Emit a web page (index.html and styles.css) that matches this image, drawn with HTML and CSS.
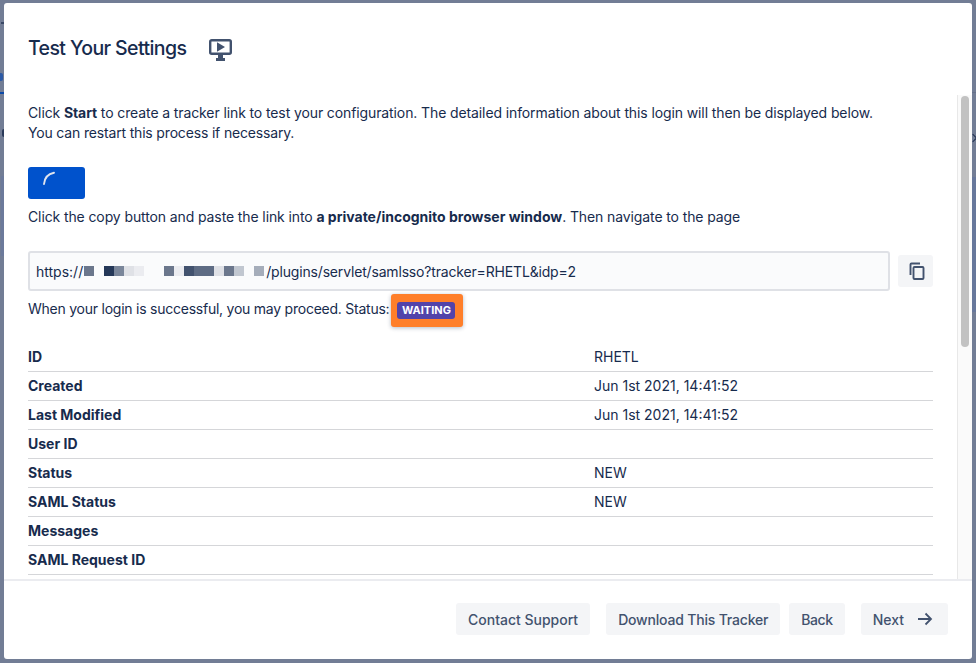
FILE: index.html
```html
<!DOCTYPE html>
<html lang="en">
<head>
    <meta charset="UTF-8">
    <meta name="viewport" content="width=device-width, initial-scale=1.0">
    <title>Test Your Settings</title>
    <link rel="stylesheet" href="styles.css">
</head>
<body>
    <!-- page behind the dialog, only its edges show -->
    <div class="backdrop">
        <span class="bg-tick"></span>
        <span class="bg-link"></span>
        <span class="bg-line"></span>
        <span class="bg-head"></span>
        <span class="bg-left"></span>
        <span class="bg-right"></span>
        <span class="bg-rule"></span>
        <span class="bg-arrow"></span>
    </div>
    <div class="modal">
        <div class="modal-header">
            <h1>Test Your Settings</h1>
            <svg class="title-icon" width="25" height="25" viewBox="0 0 25 25">
                <rect x="2.200" y="3.200" width="20.600" height="13.600" rx="1.500" fill="none" stroke="#42526e" stroke-width="2.400"/>
                <path fill="#42526e" d="M9 5.300 17 10l-8 4.700zM10 18h5v3h2v3H8v-3h2z"/>
            </svg>
        </div>
        <div class="modal-body">
            <div class="content">
                <p class="intro"><span class="tight-1">Click <b>Start</b> to create a tracker link to test your configuration. The detailed information about this login will then be displayed below.</span><br><span class="tight-2">You can restart this process if necessary.</span></p>
                <button class="start-btn">
                    <svg width="20" height="20" viewBox="0 0 20 20"><path d="M3 14C3.500 8.500 7 4 13 2.800" fill="none" stroke="#dfe4ee" stroke-width="1.900" stroke-linecap="round"/></svg>
                </button>
                <p class="copy-hint"><span class="tight-1">Click the copy button and paste the link into </span><b>a private/incognito browser window</b><span class="tight-1">. Then navigate to the page</span></p>
                <div class="link-row">
                    <div class="link-box">
                        <span>https://</span>
                        <span class="blur">
                            <i class="b1"></i><i class="gap"></i><i class="b2"></i><i class="b3"></i><i class="b4"></i><i class="b5"></i><i class="gap"></i><i class="gap"></i>
                            <i class="b1"></i><i class="b5"></i><i class="b6"></i><i class="b7"></i><i class="b7"></i><i class="b4"></i><i class="b1"></i><i class="b8"></i><i class="gap"></i><i class="b9"></i>
                        </span>
                        <span class="tight-2">/plugins/servlet/samlsso?tracker=RHETL&amp;idp=2</span>
                    </div>
                    <button class="copy-btn">
                        <svg width="20" height="20" viewBox="0 0 20 20" fill="none" stroke="#42526e" stroke-width="1.900">
                            <rect x="7.500" y="6" width="10" height="12" rx="1"/>
                            <path d="M4.500 14V3.500a1 1 0 0 1 1-1H14"/>
                        </svg>
                    </button>
                </div>
                <p class="status-line"><span class="tight-3">When your login is successful, you may proceed. Status:</span><span class="status-ring"><span class="lozenge">WAITING</span></span></p>
                <table class="info-table">
                    <tr><th>ID</th><td>RHETL</td></tr>
                    <tr><th>Created</th><td>Jun 1st 2021, 14:41:52</td></tr>
                    <tr><th>Last Modified</th><td>Jun 1st 2021, 14:41:52</td></tr>
                    <tr><th>User ID</th><td></td></tr>
                    <tr><th>Status</th><td>NEW</td></tr>
                    <tr><th>SAML Status</th><td>NEW</td></tr>
                    <tr><th>Messages</th><td></td></tr>
                    <tr><th>SAML Request ID</th><td></td></tr>
                </table>
            </div>
            <div class="scrollbar"><div class="thumb"></div></div>
        </div>
        <div class="modal-footer">
            <button class="btn btn-contact">Contact Support</button>
            <button class="btn btn-download">Download This Tracker</button>
            <button class="btn btn-back">Back</button>
            <button class="btn btn-next">Next
                <svg width="16" height="14" viewBox="0 0 16 14" fill="none" stroke="#42526e" stroke-width="1.800"><path d="M1 7h13M8.500 1.500 14 7l-5.500 5.500"/></svg>
            </button>
        </div>
    </div>
</body>
</html>
```
FILE: styles.css
```css
html, body {
    height: 100%;
}
body {
    margin: 0;
    background-color: #727d95;
    font-family: Inter, "Liberation Sans", sans-serif;
    font-size: 14px;
    color: #172b4d;
    overflow: hidden;
    padding: 3px 4px 4px;
    box-sizing: border-box;
}
.backdrop span {
    position: absolute;
    display: block;
}
.bg-tick {
    left: 1px;
    top: 22px;
    width: 3px;
    height: 2px;
    background-color: #3a4866;
}
.bg-link {
    left: 0;
    top: 73px;
    width: 3px;
    height: 8px;
    border-radius: 0 2px 2px 0;
    background-color: #2c5aa6;
}
.bg-line {
    left: 0;
    top: 92px;
    width: 4px;
    height: 2px;
    background-color: #0c4aa8;
}
.bg-head {
    left: 2px;
    top: 129px;
    width: 2px;
    height: 8px;
    border-radius: 2px 0 0 2px;
    background-color: #2a3a5a;
}
.bg-left {
    left: 1px;
    top: 176px;
    width: 3px;
    height: 80px;
    background-color: #6c7a9b;
}
.bg-right {
    left: 972px;
    top: 177px;
    width: 4px;
    height: 135px;
    background-color: #67779b;
}
.bg-rule {
    left: 972px;
    top: 92px;
    width: 4px;
    height: 1px;
    background-color: #66718a;
}
.bg-arrow {
    left: 970px;
    top: 135px;
    width: 5px;
    height: 5px;
    border-top: 1.500px solid #1f2f50;
    border-right: 1.500px solid #1f2f50;
    transform: rotate(45deg);
}
.modal {
    position: relative;
    height: 656px;
    background-color: #fff;
    border-radius: 3px;
    display: flex;
    flex-direction: column;
}
.modal-header {
    height: 92px;
    flex: none;
    display: flex;
    align-items: flex-start;
    padding: 33px 0 0 24px;
    box-sizing: border-box;
}
.modal-header h1 {
    margin: 0;
    font-size: 19.5px;
    line-height: 24px;
    font-weight: 500;
    letter-spacing: -0.6px;
}
.title-icon {
    margin-left: 22px;
    margin-top: 1px;
}
.modal-body {
    height: 484px;
    flex: none;
    display: flex;
    justify-content: space-between;
    overflow: hidden;
}
.content {
    width: 905px;
    margin-left: 24px;
    flex: none;
}
.tight-1 {
    letter-spacing: -0.11px;
}
.tight-2 {
    letter-spacing: -0.17px;
}
.tight-3 {
    letter-spacing: -0.24px;
}
.intro {
    margin: 8px 0 0;
    line-height: 20px;
}
.start-btn {
    display: flex;
    align-items: flex-start;
    width: 57px;
    height: 32px;
    margin-top: 24px;
    padding: 3px 0 0 13px;
    border: none;
    border-radius: 3px;
    background-color: #0052cc;
    box-sizing: border-box;
}
.copy-hint {
    margin: 8px 0 0;
    line-height: 20px;
}
.link-row {
    display: flex;
    justify-content: space-between;
    margin-top: 24px;
}
.link-box {
    width: 862px;
    height: 40px;
    box-sizing: border-box;
    display: flex;
    align-items: center;
    padding-left: 6px;
    background-color: #fafbfc;
    border: 2px solid #dfe1e6;
    border-radius: 3px;
}
.blur {
    display: flex;
    height: 10px;
    margin: 0 2px 0 1px;
}
.blur i {
    display: block;
    width: 10px;
    height: 10px;
}
.blur .gap { background-color: transparent; }
.blur .b1 { background-color: #6b778c; }
.blur .b2 { background-color: #253858; }
.blur .b3 { background-color: #7a869a; }
.blur .b4 { background-color: #dfe1e6; }
.blur .b5 { background-color: #ebecf0; }
.blur .b6 { background-color: #42526e; }
.blur .b7 { background-color: #5e6c84; }
.blur .b8 { background-color: #c1c7d0; }
.blur .b9 { background-color: #a5adba; }
.copy-btn {
    width: 35px;
    height: 32px;
    margin-top: 4px;
    padding: 0;
    border: none;
    border-radius: 3px;
    background-color: #f4f5f7;
    display: flex;
    align-items: center;
    justify-content: center;
}
.status-line {
    margin: 3px 0 0;
    display: flex;
    align-items: flex-start;
    line-height: 20px;
}
.status-line .tight-3 {
    margin-top: 5px;
}
.status-ring {
    padding: 8px 8px 8px 6px;
    margin-left: 2px;
    background-color: #ff7f2a;
    border-radius: 3px;
    box-shadow: 0 1px 4px rgba(9, 30, 66, 0.3);
    line-height: 0;
}
.lozenge {
    display: inline-block;
    height: 17px;
    line-height: 17px;
    padding: 0 4.5px;
    background-color: #5243aa;
    border-radius: 3px;
    color: #fff;
    font-size: 11px;
    font-weight: 700;
}
.info-table {
    width: 100%;
    margin-top: 16px;
    border-collapse: collapse;
}
.info-table th, .info-table td {
    height: 26px;
    padding: 0 0 2px;
    border-bottom: 1px solid #d5d6d9;
    text-align: left;
}
.info-table th {
    width: 566px;
    font-weight: 700;
}
.info-table td {
    font-weight: 400;
}
.scrollbar {
    width: 15px;
    height: 100%;
    flex: none;
    background-color: #fafafa;
    border-left: 1px solid #e8e8e8;
    box-sizing: border-box;
}
.thumb {
    width: 8px;
    height: 251px;
    margin: 1px 0 0 3px;
    border-radius: 4px;
    background-color: #c2c2c2;
}
.modal-footer {
    flex: 1;
    display: flex;
    align-items: flex-start;
    padding: 22px 24px 0 0;
    border-top: 2px solid #ebecf0;
    justify-content: flex-end;
    box-sizing: border-box;
}
.btn {
    height: 32px;
    padding: 0 12px;
    border: none;
    border-radius: 3px;
    background-color: #f4f5f7;
    color: #42526e;
    font-family: inherit;
    font-size: 14px;
    font-weight: 500;
    display: flex;
    align-items: center;
}
.btn-contact {
    margin-right: 16px;
}
.btn-download {
    letter-spacing: -0.19px;
}
.btn-back {
    margin-left: 9px;
    margin-right: 16px;
    letter-spacing: -0.4px;
}
.btn-next {
    padding-right: 15px;
}
.btn-next svg {
    margin-left: 13px;
}
```
